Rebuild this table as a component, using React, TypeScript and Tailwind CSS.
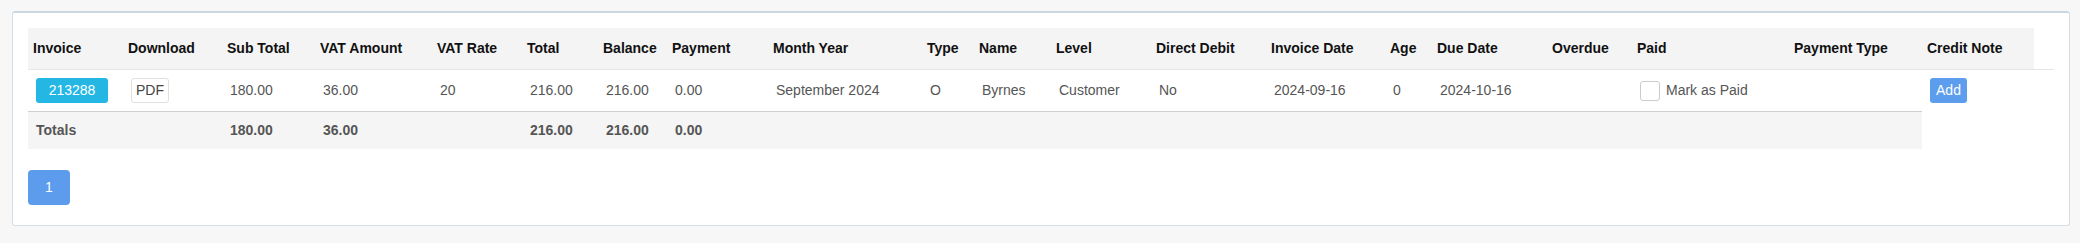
const COLS = [95, 99, 93, 117, 90, 76, 69, 101, 154, 52, 77, 100, 115, 119, 47, 115, 85, 157, 133, 112, 20];

const HEADERS = [
  "Invoice",
  "Download",
  "Sub Total",
  "VAT Amount",
  "VAT Rate",
  "Total",
  "Balance",
  "Payment",
  "Month Year",
  "Type",
  "Name",
  "Level",
  "Direct Debit",
  "Invoice Date",
  "Age",
  "Due Date",
  "Overdue",
  "Paid",
  "Payment Type",
  "Credit Note",
];

const td = "h-[42px] border-t border-[#e6e6e6] pl-[8px] align-middle text-[#555]";
const tot = "h-[38px] border-t border-[#cfcfcf] bg-[#f5f5f5] pl-[8px] align-middle font-bold text-[#555]";

export default function App() {
  return (
    <div className="h-[243px] bg-[#f7f7f7] pt-[11px] font-['Liberation_Sans',Arial,sans-serif] text-[14px]">
      <div className="ml-[12px] mr-[10px] rounded-[3px] border border-t-2 border-[#d3dee6] border-t-[#cbd8e2] bg-white px-[15px] pt-[15px] pb-[20px]">
        <table className="w-[2026px] table-fixed border-separate border-spacing-0 text-left">
          <colgroup>
            {COLS.map((w, i) => (
              <col key={i} style={{ width: w }} />
            ))}
          </colgroup>
          <thead>
            <tr>
              {HEADERS.map((h) => (
                <th key={h} className="h-[41px] bg-[#f4f4f4] pl-[5px] align-middle font-bold text-[#111]">
                  {h}
                </th>
              ))}
            </tr>
          </thead>
          <tbody>
            <tr>
              <td className={td}>
                <span className="flex h-[25px] w-[72px] items-center justify-center rounded-[3px] bg-[#25b7e4] text-white">
                  213288
                </span>
              </td>
              <td className={td}>
                <button className="flex h-[25px] w-[38px] items-center justify-center rounded-[3px] border border-[#e0e0e0] bg-white text-[#444]">
                  PDF
                </button>
              </td>
              <td className={td}>180.00</td>
              <td className={td}>36.00</td>
              <td className={td}>20</td>
              <td className={td}>216.00</td>
              <td className={td}>216.00</td>
              <td className={td}>0.00</td>
              <td className={td}>September 2024</td>
              <td className={td}>O</td>
              <td className={td}>Byrnes</td>
              <td className={td}>Customer</td>
              <td className={td}>No</td>
              <td className={td}>2024-09-16</td>
              <td className={td}>0</td>
              <td className={td}>2024-10-16</td>
              <td className={td}></td>
              <td className={td}>
                <label className="flex items-center gap-[6px]">
                  <span className="h-[20px] w-[20px] rounded-[3px] border border-[#cccccc] bg-white" />
                  Mark as Paid
                </label>
              </td>
              <td className={td}></td>
              <td className={td}>
                <button className="flex h-[25px] w-[37px] items-center justify-center rounded-[3px] bg-[#5c9ded] text-white">
                  Add
                </button>
              </td>
              <td className={td}></td>
            </tr>
            <tr>
              <td className={tot}>Totals</td>
              <td className={tot}></td>
              <td className={tot}>180.00</td>
              <td className={tot}>36.00</td>
              <td className={tot}></td>
              <td className={tot}>216.00</td>
              <td className={tot}>216.00</td>
              <td className={tot}>0.00</td>
              <td className={tot}></td>
              <td className={tot}></td>
              <td className={tot}></td>
              <td className={tot}></td>
              <td className={tot}></td>
              <td className={tot}></td>
              <td className={tot}></td>
              <td className={tot}></td>
              <td className={tot}></td>
              <td className={tot}></td>
              <td className={tot}></td>
            </tr>
          </tbody>
        </table>

        <div className="mt-[21px] flex">
          <button className="flex h-[35px] w-[42px] items-center justify-center rounded-[4px] bg-[#5d9cec] text-white">
            1
          </button>
        </div>
      </div>
    </div>
  );
}
